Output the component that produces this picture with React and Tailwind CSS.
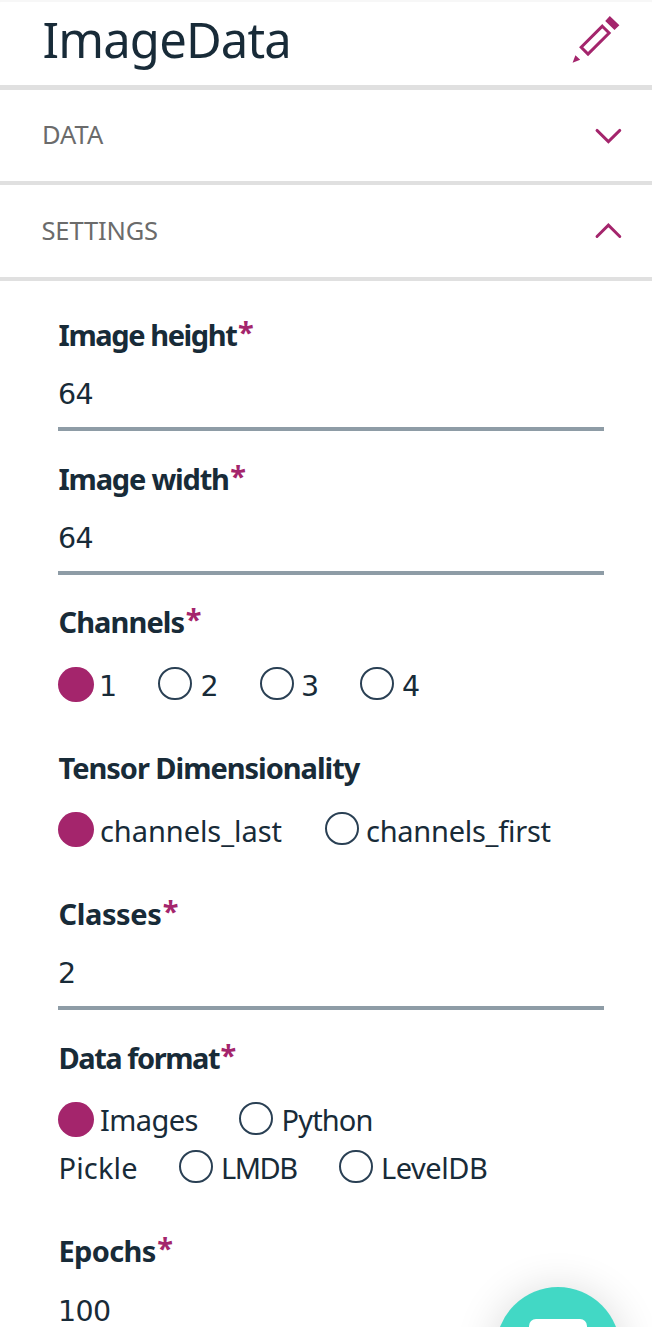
import React from "react";

function Chevron({ up }) {
  return (
    <svg width="28" height="18" viewBox="0 0 28 18" fill="none" stroke="#a4256c" strokeWidth="2.9" strokeLinecap="round" strokeLinejoin="miter">
      <path d={up ? "M3 14.5 L14.4 3.1 L25.8 14.5" : "M3 3.4 L14.4 14.6 L25.8 3.4"} />
    </svg>
  );
}

function Pencil() {
  return (
    <svg className="mt-[15px]" width="48" height="49" viewBox="572 15 48 49">
      <path fill="#a4256c" d="M609.8 16 L619.4 25.2 L614.5 30.1 L605.2 20.9 Z M575.4 55.2 L580.2 59.8 L572.6 62.8 Z" />
      <path fill="none" stroke="#a4256c" strokeWidth="3" d="M602.3 26.2 L609.1 33 L588 54.1 L581.2 47.3 Z" />
    </svg>
  );
}

function Label({ text, className, required = true }) {
  return (
    <div className="flex h-10 pl-[0.5px] text-[29px] leading-10 font-bold whitespace-pre">
      <span className={className}>{text}</span>
      {required && <span className="-mt-[3px] ml-[1.5px] text-[#a4256c]">*</span>}
    </div>
  );
}

function Value({ children }) {
  return (
    <div className="h-[57px] border-b-4 border-[#8e9ca6] pt-px font-['DejaVu_Sans',sans-serif] text-[28.5px] leading-10 tracking-[-0.6px]">
      {children}
    </div>
  );
}

function Option({ checked, className = "", textClass, children }) {
  return (
    <div className={"flex shrink-0 whitespace-pre " + className}>
      {checked ? (
        <span className="h-[35px] w-9 shrink-0 rounded-full bg-[#a4256c]" />
      ) : (
        <span className="h-[33px] w-[34px] shrink-0 rounded-full border-2 border-[#2a4054]" />
      )}
      <span className={textClass}>{children}</span>
    </div>
  );
}

export default function App() {
  return (
    <div className="relative flex h-[1327px] w-full flex-col overflow-hidden bg-white font-['Noto_Sans',sans-serif] text-[#182b38]">
      <header className="flex h-[90px] shrink-0 items-start justify-between border-b-5 border-[#e0e0e0] pr-8 pl-[42.5px] shadow-[inset_0_2px_1px_#f7f7f7]">
        <h1 className="mt-1.5 text-[49px] leading-[66px] tracking-[-0.85px]">ImageData</h1>
        <Pencil />
      </header>
      <section className="flex h-[95px] shrink-0 items-start justify-between border-b-4 border-[#e0e0e0] pr-[30px] pl-[42px] text-[25.5px] text-[#6b6b6b]">
        <span className="mt-[26px] leading-9">DATA</span>
        <span className="mt-[37px]"><Chevron /></span>
      </section>
      <section className="flex h-24 shrink-0 items-start justify-between border-b-4 border-[#e0e0e0] pr-[30px] pl-[41.5px] text-[25.5px] text-[#6b6b6b]">
        <span className="mt-[27px] leading-9 tracking-[-0.15px]">SETTINGS</span>
        <span className="mt-[37px]"><Chevron up /></span>
      </section>

      <main className="flex flex-col pt-[34px] pr-12 pl-[58px]">
        <div className="flex flex-col gap-[19px]">
          <Label text="Image height" className="tracking-[-1.4px]" />
          <Value>64</Value>
        </div>
        <div className="mt-7 flex flex-col gap-[19px]">
          <Label text="Image width" className="tracking-[-1.2px]" />
          <Value>64</Value>
        </div>

        <div className="mt-[27px]">
          <Label text="Channels" className="tracking-[-0.93px]" />
          <div className="mt-6 flex h-10 pt-px font-['DejaVu_Sans',sans-serif] text-[28.5px] leading-10">
            <Option checked className="w-[100px]" textClass="ml-[5px]">1</Option>
            <Option className="w-[102px]" textClass="ml-[8.5px]">2</Option>
            <Option className="w-[100px]" textClass="ml-[7px]">3</Option>
            <Option textClass="ml-2">4</Option>
          </div>
        </div>

        <div className="mt-[42px]">
          <Label text="Tensor Dimensionality" className="tracking-[-1.03px]" required={false} />
          <div className="mt-[23px] flex h-10 pt-px text-[29px] leading-[38px]">
            <Option checked className="w-[267px]" textClass="ml-1.5 tracking-[-0.06px]">channels_last</Option>
            <Option textClass="ml-[7px] tracking-[-0.26px]">channels_first</Option>
          </div>
        </div>

        <div className="mt-[43px] flex flex-col gap-[19px]">
          <Label text="Classes" className="tracking-[-0.4px]" />
          <Value>2</Value>
        </div>

        <div className="mt-7">
          <Label text="Data format" className="tracking-[-1.46px]" />
          <div className="mt-[22px] flex h-12 pt-0.5 text-[29px] leading-9">
            <Option checked className="w-[181px]" textClass="ml-1.5 tracking-[-0.58px]">Images</Option>
            <Option textClass="ml-[8.5px] tracking-[-0.85px]">Python</Option>
          </div>
          <div className="flex h-10 pt-0.5 text-[29px] leading-9">
            <span className="w-[121px] pl-[0.5px] tracking-[0.15px]">Pickle</span>
            <Option className="w-40" textClass="ml-2 tracking-[-1.5px]">LMDB</Option>
            <Option textClass="ml-2 tracking-[-0.45px]">LevelDB</Option>
          </div>
        </div>

        <div className="mt-[43px] flex flex-col gap-5">
          <Label text="Epochs" className="tracking-[-0.65px]" />
          <Value>100</Value>
        </div>
      </main>

      <button aria-label="Open chat" className="absolute top-[1287px] left-[496px] flex h-[124px] w-[124px] justify-center rounded-full bg-[#42d8c5] pt-8 shadow-[0_4px_44px_rgba(0,0,0,0.16)]">
        <span className="h-14 w-[58px] rounded-[7px] bg-white" />
      </button>
    </div>
  );
}
